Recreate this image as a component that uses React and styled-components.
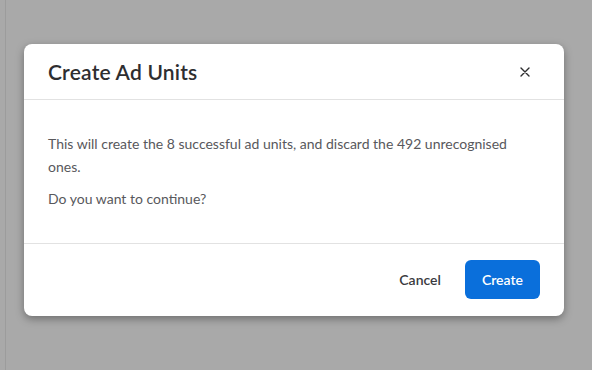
import React from "react";
import styled, { createGlobalStyle } from "styled-components";

const Global = createGlobalStyle`
  html, body { margin: 0; padding: 0; }
  body { background: #a9a9a9; font-family: "Lato", "Liberation Sans", sans-serif; }
  * { box-sizing: border-box; }
`;

const Page = styled.div`
  width: 592px;
  height: 370px;
  display: flex;
  background: #a9a9a9;
  overflow: hidden;
`;

const EdgeStrip = styled.div`
  width: 6px;
  flex: none;
  border-right: 1px solid #9c9c9c;
`;

const Stage = styled.div`
  flex: 1;
  padding: 44px 0 0 18px;
`;

const Modal = styled.div`
  width: 540px;
  background: #fff;
  border-radius: 8px;
  box-shadow: 0 3px 8px rgba(0, 0, 0, 0.35);
  display: flex;
  flex-direction: column;
`;

const Header = styled.div`
  height: 56px;
  padding: 0 24px;
  display: flex;
  align-items: center;
  justify-content: space-between;
  border-bottom: 1px solid #e2e2e2;
`;

const Title = styled.h2`
  margin: 0;
  font-size: 21px;
  font-weight: 600;
  color: #2e2e30;
  letter-spacing: 0.2px;
`;

const CloseButton = styled.button`
  border: none;
  background: none;
  padding: 0;
  width: 32px;
  height: 32px;
  margin-right: -1px;
  display: flex;
  align-items: center;
  justify-content: center;
  cursor: pointer;
`;

const Body = styled.div`
  padding: 32px 24px 33px;
  border-bottom: 1px solid #e2e2e2;
`;

const Text = styled.p`
  margin: 0;
  max-width: 484px;
  font-size: 14px;
  line-height: 23px;
  color: #58585c;
  & + & { margin-top: 9px; }
`;

const Footer = styled.div`
  height: 72px;
  padding: 0 24px 2px;
  display: flex;
  align-items: center;
  justify-content: flex-end;
  gap: 8px;
`;

const Button = styled.button`
  height: 39px;
  padding: 0 ${(p) => (p.$primary ? "17px" : "16px")};
  border: none;
  border-radius: 6px;
  font-family: inherit;
  font-size: 14px;
  font-weight: 600;
  background: ${(p) => (p.$primary ? "#0a6fdb" : "transparent")};
  color: ${(p) => (p.$primary ? "#ffffff" : "#3a3a3e")};
  cursor: pointer;
`;

export default function App() {
  return (
    <>
      <Global />
      <Page>
        <EdgeStrip />
        <Stage>
          <Modal>
            <Header>
              <Title>Create Ad Units</Title>
              <CloseButton aria-label="Close">
                <svg width="10" height="10" viewBox="0 0 10 10">
                  <path d="M1 1L9 9M9 1L1 9" stroke="#2e2e30" strokeWidth="1.4" strokeLinecap="round" />
                </svg>
              </CloseButton>
            </Header>
            <Body>
              <Text>
                This will create the 8 successful ad units, and discard the 492 unrecognised ones.
              </Text>
              <Text>Do you want to continue?</Text>
            </Body>
            <Footer>
              <Button>Cancel</Button>
              <Button $primary>Create</Button>
            </Footer>
          </Modal>
        </Stage>
      </Page>
    </>
  );
}
